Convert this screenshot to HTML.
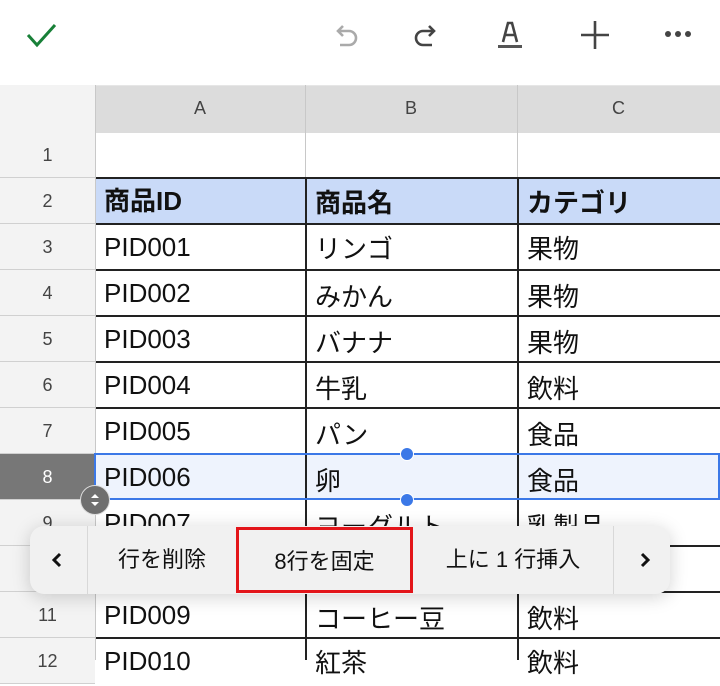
<!DOCTYPE html>
<html><head><meta charset="utf-8"><style>
body{margin:0;width:720px;height:660px;overflow:hidden;background:#fff;font-family:"Liberation Sans","Noto Sans CJK JP",sans-serif;position:relative}
.a{position:absolute}
.rh{position:absolute;left:0;width:95px;background:#f3f3f3;color:#444;font-size:18px;text-align:center;border-bottom:1px solid #d0d0d0;box-sizing:border-box}
.c{position:absolute;font-size:26px;color:#111;padding-left:8px;box-sizing:border-box;white-space:nowrap;overflow:hidden}
</style></head><body>
<svg class="a" style="left:24px;top:20px" width="36" height="30"><path d="M4 15 L13 25 L31 5" fill="none" stroke="#188038" stroke-width="3"/></svg>
<svg class="a" style="left:330px;top:22px" width="32" height="28"><path d="M8 9 H19 A7 7 0 0 1 19 23 H10 M13 4 L8 9 L13 14" fill="none" stroke="#aaa" stroke-width="2.6"/></svg>
<svg class="a" style="left:410px;top:22px" width="32" height="28"><path d="M24 9 H13 A7 7 0 0 0 13 23 H22 M19 4 L24 9 L19 14" fill="none" stroke="#444" stroke-width="2.6"/></svg>
<svg class="a" style="left:494px;top:18px" width="32" height="32"><path d="M9 24 L14 5 H18 L23 24 M11.5 17 H20.5" fill="none" stroke="#444" stroke-width="2.6"/><rect x="4" y="27" width="24" height="3" fill="#555"/></svg>
<svg class="a" style="left:578px;top:18px" width="34" height="34"><path d="M17 3 V31 M3 17 H31" stroke="#444" stroke-width="2.6"/></svg>
<svg class="a" style="left:662px;top:28px" width="32" height="12"><circle cx="6" cy="6" r="3" fill="#444"/><circle cx="16" cy="6" r="3" fill="#444"/><circle cx="26" cy="6" r="3" fill="#444"/></svg>

<div class="a" style="left:0;top:85px;width:720px;height:47px;background:#dcdcdc;border-top:1px solid #e6e6e6"></div>
<div class="a" style="left:0;top:85px;width:95px;height:47px;background:#f3f3f3"></div>
<div class="a" style="left:95px;top:85px;width:210px;height:47px;line-height:47px;text-align:center;color:#444;font-size:18px">A</div>
<div class="a" style="left:305px;top:85px;width:212px;height:47px;line-height:47px;text-align:center;color:#444;font-size:18px">B</div>
<div class="a" style="left:517px;top:85px;width:203px;height:47px;line-height:47px;text-align:center;color:#444;font-size:18px">C</div>
<div class="a" style="left:305px;top:85px;width:1px;height:93px;background:#c8c8c8"></div>
<div class="a" style="left:517px;top:85px;width:1px;height:93px;background:#c8c8c8"></div>

<div class="a" style="left:96px;top:178px;width:624px;height:46px;background:#c9daf8"></div>
<div class="a" style="left:96px;top:454px;width:624px;height:46px;background:#eef3fd"></div>

<div class="rh" style="top:132px;height:46px;line-height:46px">1</div>
<div class="rh" style="top:178px;height:46px;line-height:46px">2</div>
<div class="rh" style="top:224px;height:46px;line-height:46px">3</div>
<div class="rh" style="top:270px;height:46px;line-height:46px">4</div>
<div class="rh" style="top:316px;height:46px;line-height:46px">5</div>
<div class="rh" style="top:362px;height:46px;line-height:46px">6</div>
<div class="rh" style="top:408px;height:46px;line-height:46px">7</div>
<div class="rh" style="top:454px;height:46px;line-height:46px;background:#777;color:#fff">8</div>
<div class="rh" style="top:500px;height:46px;line-height:46px">9</div>
<div class="rh" style="top:546px;height:46px;line-height:46px">10</div>
<div class="rh" style="top:592px;height:46px;line-height:46px">11</div>
<div class="rh" style="top:638px;height:46px;line-height:46px">12</div>
<div class="a" style="left:95px;top:85px;width:1px;height:575px;background:#c8c8c8"></div>

<div class="a" style="left:96px;top:177px;width:624px;height:2px;background:#222"></div>
<div class="a" style="left:96px;top:223px;width:624px;height:2px;background:#222"></div>
<div class="a" style="left:96px;top:269px;width:624px;height:2px;background:#222"></div>
<div class="a" style="left:96px;top:315px;width:624px;height:2px;background:#222"></div>
<div class="a" style="left:96px;top:361px;width:624px;height:2px;background:#222"></div>
<div class="a" style="left:96px;top:407px;width:624px;height:2px;background:#222"></div>
<div class="a" style="left:96px;top:545px;width:624px;height:2px;background:#222"></div>
<div class="a" style="left:96px;top:591px;width:624px;height:2px;background:#222"></div>
<div class="a" style="left:96px;top:637px;width:624px;height:2px;background:#222"></div>
<div class="a" style="left:305px;top:178px;width:2px;height:482px;background:#222"></div>
<div class="a" style="left:517px;top:178px;width:2px;height:482px;background:#222"></div>
<div class="a" style="left:94px;top:453px;width:626px;height:47px;border:2px solid #3b78e7;box-sizing:border-box"></div>
<div class="a" style="left:400px;top:447px;width:12px;height:12px;border-radius:50%;background:#3b78e7;border:1px solid #fff"></div>
<div class="a" style="left:400px;top:493px;width:12px;height:12px;border-radius:50%;background:#3b78e7;border:1px solid #fff"></div>
<div class="a" style="left:80px;top:485px;width:28px;height:28px;border-radius:50%;background:#6f6f6f;border:1px solid #ddd"></div>
<svg class="a" style="left:88px;top:491px" width="14" height="18"><path d="M3 7 L7 3 L11 7Z M3 11 L7 15 L11 11Z" fill="#fff"/></svg>

<div class="c" style="left:96px;top:178px;width:209px;line-height:46px;font-weight:bold">商品ID</div>
<div class="c" style="left:307px;top:180px;width:210px;line-height:46px;font-weight:bold">商品名</div>
<div class="c" style="left:519px;top:180px;width:200px;line-height:46px;font-weight:bold">カテゴリ</div>
<div class="c" style="left:96px;top:224px;line-height:46px">PID001</div><div class="c" style="left:307px;top:226px;line-height:46px">リンゴ</div><div class="c" style="left:519px;top:226px;line-height:46px">果物</div>
<div class="c" style="left:96px;top:270px;line-height:46px">PID002</div><div class="c" style="left:307px;top:274px;line-height:46px">みかん</div><div class="c" style="left:519px;top:274px;line-height:46px">果物</div>
<div class="c" style="left:96px;top:316px;line-height:46px">PID003</div><div class="c" style="left:307px;top:320px;line-height:46px">バナナ</div><div class="c" style="left:519px;top:320px;line-height:46px">果物</div>
<div class="c" style="left:96px;top:362px;line-height:46px">PID004</div><div class="c" style="left:307px;top:366px;line-height:46px">牛乳</div><div class="c" style="left:519px;top:366px;line-height:46px">飲料</div>
<div class="c" style="left:96px;top:408px;line-height:46px">PID005</div><div class="c" style="left:307px;top:412px;line-height:46px">パン</div><div class="c" style="left:519px;top:412px;line-height:46px">食品</div>
<div class="c" style="left:96px;top:454px;line-height:46px">PID006</div><div class="c" style="left:307px;top:458px;line-height:46px">卵</div><div class="c" style="left:519px;top:458px;line-height:46px">食品</div>
<div class="c" style="left:96px;top:500px;line-height:46px">PID007</div><div class="c" style="left:307px;top:504px;line-height:46px">ヨーグルト</div><div class="c" style="left:519px;top:504px;line-height:46px">乳製品</div>
<div class="c" style="left:96px;top:592px;line-height:46px">PID009</div><div class="c" style="left:307px;top:596px;line-height:46px">コーヒー豆</div><div class="c" style="left:519px;top:596px;line-height:46px">飲料</div>
<div class="c" style="left:96px;top:638px;line-height:46px">PID010</div><div class="c" style="left:307px;top:640px;line-height:46px">紅茶</div><div class="c" style="left:519px;top:640px;line-height:46px">飲料</div>

<div class="a" style="left:30px;top:526px;width:640px;height:68px;border-radius:14px;background:#f1f1f1;box-shadow:0 3px 18px rgba(0,0,0,.18);font-size:22px;color:#111">
<svg class="a" style="left:20px;top:25px" width="14" height="18"><path d="M10 3 L4 9 L10 15" fill="none" stroke="#111" stroke-width="3"/></svg>
<div class="a" style="left:57px;top:0;width:1px;height:68px;background:#d8d8d8"></div>
<div class="a" style="left:58px;top:0;width:148px;height:68px;line-height:68px;text-align:center">行を削除</div>
<div class="a" style="left:206px;top:1px;width:177px;height:66px;line-height:64px;text-align:center;border:3px solid #e3151a;box-sizing:border-box">8行を固定</div>
<div class="a" style="left:383px;top:0;width:200px;height:68px;line-height:68px;text-align:center">上に 1 行挿入</div>
<div class="a" style="left:583px;top:0;width:1px;height:68px;background:#d8d8d8"></div>
<svg class="a" style="left:608px;top:25px" width="14" height="18"><path d="M4 3 L10 9 L4 15" fill="none" stroke="#111" stroke-width="3"/></svg>
</div>
</body></html>
